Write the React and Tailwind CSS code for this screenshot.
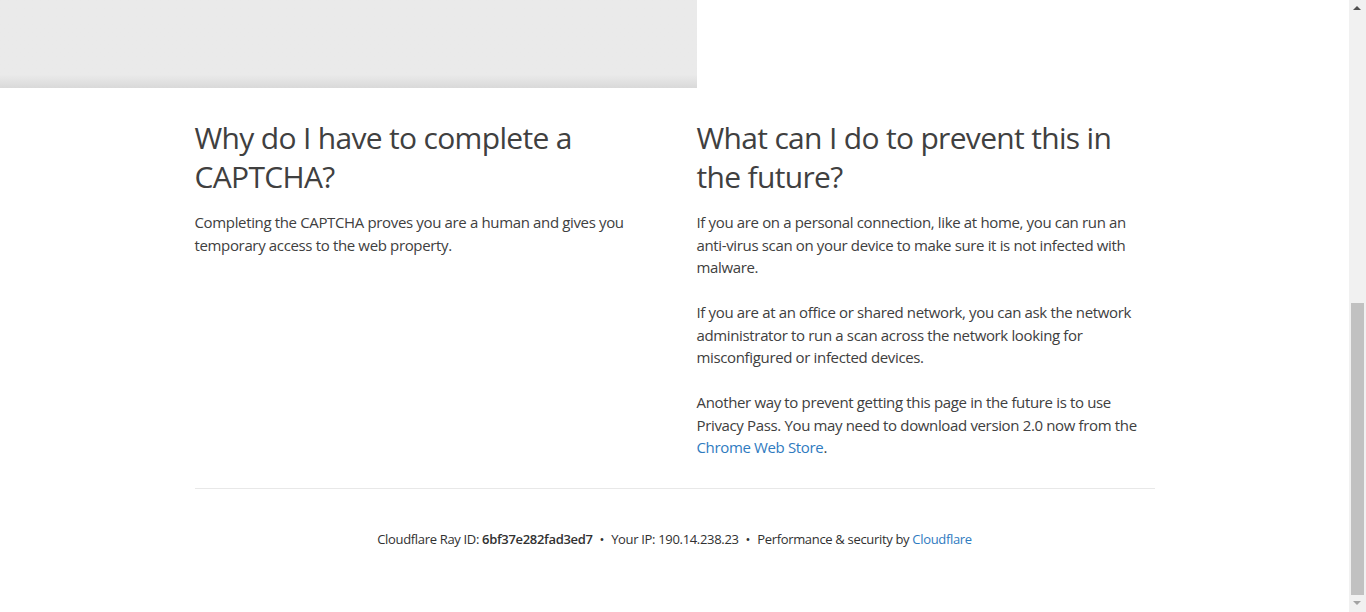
const font = { fontFamily: '"Open Sans", "Noto Sans", sans-serif' };

function Scrollbar() {
  return (
    <div className="relative w-[17px] h-full bg-[#f1f1f1] shrink-0">
      {/* up arrow */}
      <div className="absolute left-[4px] top-[6px] w-0 h-0 border-l-[4px] border-r-[4px] border-b-[4px] border-l-transparent border-r-transparent border-b-[#505050]" />
      {/* thumb */}
      <div className="absolute left-[2px] top-[303px] w-[13px] h-[292px] bg-[#c1c1c1]" />
      {/* down arrow */}
      <div className="absolute left-[4px] top-[601px] w-0 h-0 border-l-[4px] border-r-[4px] border-t-[4px] border-l-transparent border-r-transparent border-t-[#a3a3a3]" />
    </div>
  );
}

function Bullet() {
  return <span className="mx-[7px]">•</span>;
}

export default function App() {
  return (
    <div className="flex w-full h-[612px] overflow-hidden bg-white text-[#404040]" style={font}>
      <div className="flex-1 min-w-0">
        {/* bottom of the captcha highlight section */}
        <div className="w-[697px] h-[88px] bg-linear-to-b from-[#eaeaea] from-85% to-[#d9d9d9]" />

        <div className="w-[960px] mx-auto pt-[30px]">
          <div className="grid grid-cols-2 gap-x-[44px] tracking-[-0.022em]">
            <div>
              <h2 className="text-[30px] leading-[39px] font-normal mb-[15px] tracking-[-0.0225em]">
                Why do I have to complete a CAPTCHA?
              </h2>
              <p className="text-[15px] leading-[22.5px]">
                Completing the CAPTCHA proves you are a human and gives you temporary access to the web property.
              </p>
            </div>
            <div>
              <h2 className="text-[30px] leading-[39px] font-normal mb-[15px] tracking-[-0.0225em]">
                What can I do to prevent this in the future?
              </h2>
              <p className="text-[15px] leading-[22.5px] mb-[22.5px]">
                If you are on a personal connection, like at home, you can run an anti-virus scan on your device to make sure it is not infected with malware.
              </p>
              <p className="text-[15px] leading-[22.5px] mb-[22.5px]">
                If you are at an office or shared network, you can ask the network administrator to run a scan across the network looking for misconfigured or infected devices.
              </p>
              <p className="text-[15px] leading-[22.5px]">
                Another way to prevent getting this page in the future is to use Privacy Pass. You may need to download version 2.0 now from the{' '}
                <a href="#" className="text-[#2f7bbf]">Chrome Web Store</a>.
              </p>
            </div>
          </div>

          <div className="mt-[29px] border-t border-[#e8e8e8]" />

          <div className="pt-[41px] text-center text-[13px] leading-[19.5px] text-[#313131] tracking-[-0.025em]">
            <span>
              Cloudflare Ray ID: <span className="font-semibold">6bf37e282fad3ed7</span>
            </span>
            <Bullet />
            <span>Your IP: 190.14.238.23</span>
            <Bullet />
            <span>
              Performance &amp; security by <a href="#" className="text-[#2f7bbf]">Cloudflare</a>
            </span>
          </div>
        </div>
      </div>
      <Scrollbar />
    </div>
  );
}
